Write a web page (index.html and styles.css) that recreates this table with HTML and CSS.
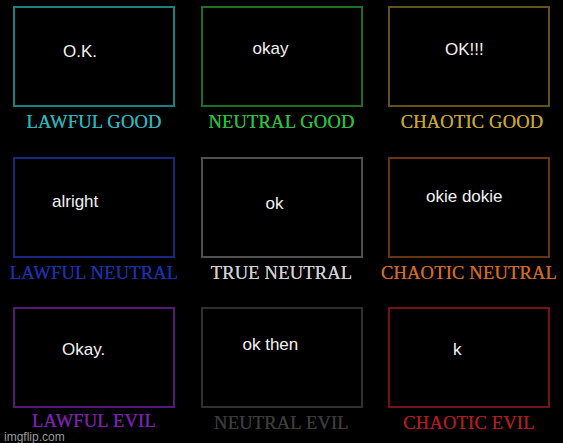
FILE: index.html
```html
<!DOCTYPE html>
<html>
<head>
<meta charset="utf-8">
<link rel="stylesheet" href="styles.css">
</head>
<body>
<div class="chart">
  <div class="cell lg">
    <div class="box"><span class="say">O.K.</span></div>
    <div class="label">LAWFUL GOOD</div>
  </div>
  <div class="cell ng">
    <div class="box"><span class="say">okay</span></div>
    <div class="label">NEUTRAL GOOD</div>
  </div>
  <div class="cell cg">
    <div class="box"><span class="say">OK!!!</span></div>
    <div class="label">CHAOTIC GOOD</div>
  </div>
  <div class="cell ln">
    <div class="box"><span class="say">alright</span></div>
    <div class="label">LAWFUL NEUTRAL</div>
  </div>
  <div class="cell tn">
    <div class="box"><span class="say">ok</span></div>
    <div class="label">TRUE NEUTRAL</div>
  </div>
  <div class="cell cn">
    <div class="box"><span class="say">okie dokie</span></div>
    <div class="label">CHAOTIC NEUTRAL</div>
  </div>
  <div class="cell le">
    <div class="box"><span class="say">Okay.</span></div>
    <div class="label">LAWFUL EVIL</div>
  </div>
  <div class="cell ne">
    <div class="box"><span class="say">ok then</span></div>
    <div class="label">NEUTRAL EVIL</div>
  </div>
  <div class="cell ce">
    <div class="box"><span class="say">k</span></div>
    <div class="label">CHAOTIC EVIL</div>
  </div>
</div>
<div class="watermark">imgflip.com</div>
</body>
</html>
```
FILE: styles.css
```css
html, body {
  margin: 0;
  padding: 0;
  background: #000;
}
body {
  width: 563px;
  height: 443px;
  position: relative;
  overflow: hidden;
}
.chart {
  display: grid;
  grid-template-columns: 162px 162px 162px;
  grid-auto-rows: 150.5px;
  column-gap: 25.5px;
  padding: 6px 0 0 13px;
}
.cell {
  display: flex;
  flex-direction: column;
  align-items: center;
}
.box {
  box-sizing: border-box;
  width: 162px;
  height: 101px;
  border: 2px solid #444;
  display: block;
}
.say {
  display: block;
  font-family: "Liberation Sans", Arial, sans-serif;
  font-size: 17px;
  line-height: 20px;
  color: #f2f2f2;
}
.label {
  font-family: "Liberation Serif", "Times New Roman", serif;
  font-size: 18.5px;
  letter-spacing: 0.2px;
  line-height: 14px;
  margin-top: 8px;
  white-space: nowrap;
  text-shadow: 0 0 0.6px currentColor;
}

.lg .box { border-color: #1a8084; }
.lg .label { color: #25b8bd; }
.lg .say { padding: 34px 0 0 48px; }

.ng .box { border-color: #1f6e26; }
.ng .label { color: #27c23a; }
.ng .say { padding: 31px 0 0 50px; }

.cg .box { border-color: #63531a; }
.cg .label { color: #c9a62a; margin-left: 6px; }
.cg .say { padding: 32px 0 0 55px; }

.ln .box { border-color: #1a2780; }
.ln .label { color: #1b2fb0; }
.ln .say { padding: 33px 0 0 37px; }

.tn .box { border-color: #505050; }
.tn .label { color: #d2d2d2; }
.tn .say { padding: 35px 0 0 63px; }

.cn .box { border-color: #653515; }
.cn .label { color: #d5691e; }
.cn .say { padding: 28px 0 0 36px; }

.le .box { border-color: #551878; }
.le .label { color: #7d20b0; margin-top: 6px; }
.le .say { padding: 31px 0 0 47px; }

.ne .box { border-color: #303030; }
.ne .label { color: #3c3c3c; }
.ne .say { padding: 26px 0 0 40px; }

.ce .box { border-color: #721414; }
.ce .label { color: #b41a1a; }
.ce .say { padding: 31px 0 0 63px; }

.watermark {
  position: absolute;
  left: 4px;
  bottom: 0;
  font-family: "Liberation Sans", Arial, sans-serif;
  font-size: 12px;
  line-height: 12px;
  color: #9a9a9a;
}
```
